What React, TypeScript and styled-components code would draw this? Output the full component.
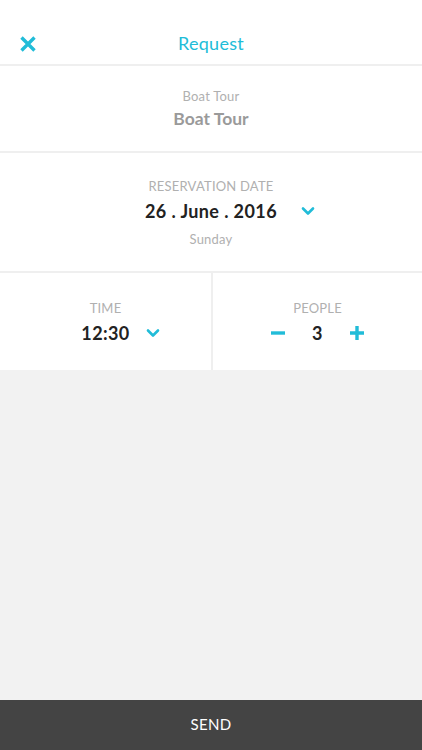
import * as React from 'react';
import styled, { createGlobalStyle } from 'styled-components';

const accent = '#21bcd8';
const line = '#efefef';
const font = "Lato, 'Noto Sans', sans-serif";

const Global = createGlobalStyle`
	html, body { margin: 0; padding: 0; height: 100%; }
	body { font-family: ${font}; background: #fff; }
	#root { height: 100%; }
`;

const Chevron = () => (
	<svg width="14" height="10" viewBox="0 0 14 10">
		<path d="M2 2.5 L7 7.5 L12 2.5" fill="none" stroke={accent} strokeWidth="2.6" strokeLinecap="round" strokeLinejoin="round" />
	</svg>
);

const Close = () => (
	<svg width="18" height="18" viewBox="0 0 18 18">
		<path d="M2.5 2.5 L15.5 15.5 M15.5 2.5 L2.5 15.5" stroke={accent} strokeWidth="3.4" strokeLinecap="butt" />
	</svg>
);

const Minus = () => (
	<svg width="16" height="16" viewBox="0 0 16 16">
		<path d="M1 8 H15" stroke={accent} strokeWidth="3.4" />
	</svg>
);

const Plus = () => (
	<svg width="16" height="16" viewBox="0 0 16 16">
		<path d="M1 8 H15 M8 1 V15" stroke={accent} strokeWidth="3.4" />
	</svg>
);

export default function App() {
	return (
		<Root>
			<Global />
			<Header>
				<CloseButton><Close /></CloseButton>
				<Title>Request</Title>
			</Header>
			<Section height={85}>
				<Label>Boat Tour</Label>
				<TourName>Boat Tour</TourName>
			</Section>
			<Section height={118}>
				<Label>RESERVATION DATE</Label>
				<ValueRow>
					<Value>26 . June . 2016</Value>
					<Chevron />
				</ValueRow>
				<SubLabel>Sunday</SubLabel>
			</Section>
			<Split>
				<Cell>
					<Label>TIME</Label>
					<ValueRow gap={16}>
						<Value>12:30</Value>
						<Chevron />
					</ValueRow>
				</Cell>
				<Cell>
					<Label>PEOPLE</Label>
					<Stepper>
						<Minus />
						<Value>3</Value>
						<Plus />
					</Stepper>
				</Cell>
			</Split>
			<Filler />
			<SendBar>SEND</SendBar>
		</Root>
	);
}

const Root = styled.div`
	display: flex;
	flex-direction: column;
	height: 100%;
	background: #fff;
`;

const Header = styled.div`
	height: 64px;
	display: flex;
	align-items: center;
	justify-content: center;
	position: relative;
	border-bottom: 2px solid ${line};
`;

const CloseButton = styled.div`
	position: absolute;
	left: 19px;
	top: 35px;
	display: flex;
`;

const Title = styled.div`
	font-size: 18px;
	color: ${accent};
	margin-top: 21px;
	letter-spacing: 0.3px;
`;

const Section = styled.div<{ height: number }>`
	height: ${p => p.height}px;
	display: flex;
	flex-direction: column;
	align-items: center;
	justify-content: center;
	border-bottom: 2px solid ${line};
`;

const Label = styled.div`
	font-size: 13px;
	color: #b0b0b0;
	line-height: 16px;
	letter-spacing: 0.2px;
`;

const SubLabel = styled(Label)`
	font-size: 13px;
	margin-top: 7px;
`;

const TourName = styled.div`
	font-size: 17.5px;
	font-weight: 700;
	color: #9a9a9a;
	margin-top: 4px;
`;

const ValueRow = styled.div<{ gap?: number }>`
	display: flex;
	align-items: center;
	gap: ${p => p.gap ?? 24}px;
	margin-top: 4px;
	padding-left: ${p => (p.gap ?? 24) + 14}px;
`;

const Value = styled.div`
	font-size: 18px;
	font-weight: 700;
	color: #222;
	letter-spacing: 0.4px;
	line-height: 26px;
`;

const Split = styled.div`
	height: 97px;
	display: grid;
	grid-template-columns: 1fr 1fr;
`;

const Cell = styled.div`
	display: flex;
	flex-direction: column;
	align-items: center;
	justify-content: center;
	padding-top: 2px;
	& + & {
		border-left: 2px solid ${line};
	}
`;

const Stepper = styled.div`
	display: flex;
	align-items: center;
	gap: 26px;
	margin-top: 4px;
`;

const Filler = styled.div`
	flex: 1;
	background: #f2f2f2;
`;

const SendBar = styled.div`
	height: 50px;
	background: #444;
	color: #fff;
	font-size: 15px;
	display: flex;
	align-items: center;
	justify-content: center;
	padding-bottom: 2px;
	box-sizing: border-box;
	letter-spacing: 0.3px;
`;
